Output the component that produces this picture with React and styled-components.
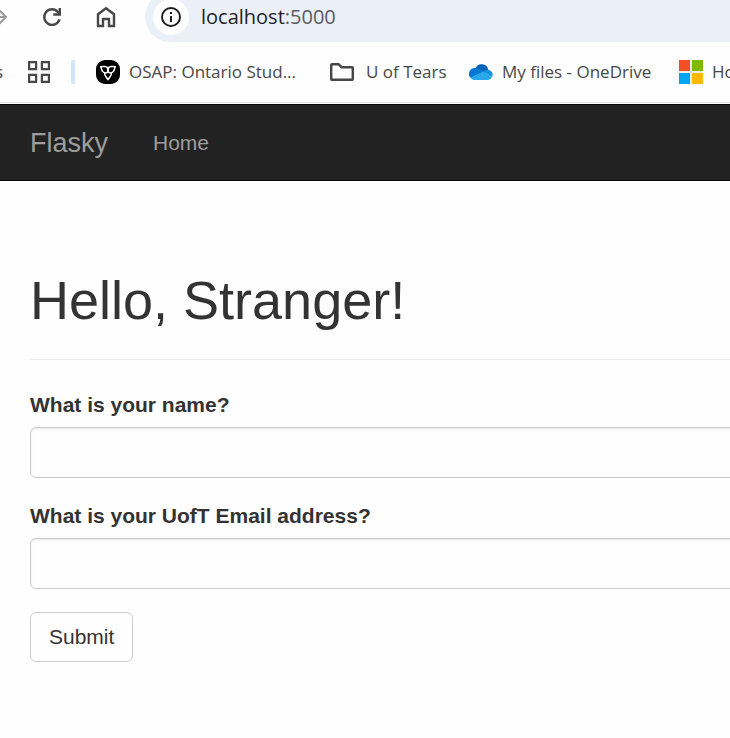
import React from "react";
import styled, { createGlobalStyle } from "styled-components";

const uiFont = `"Open Sans", "Noto Sans", sans-serif`;
const pageFont = `"Liberation Sans", Arial, sans-serif`;

const GlobalStyle = createGlobalStyle`
  *, *::before, *::after { box-sizing: border-box; }
  body {
    margin: 0;
    background: #fefefe;
    color: #333;
    font-family: ${pageFont};
    font-size: 21px;
    line-height: 30px;
    overflow-x: hidden;
  }
  svg { display: block; flex: none; }
`;

const BrowserChrome = styled.div`
  background: #fefefe;
  border-bottom: 1px solid #dcdcdc;
  font-family: ${uiFont};
  overflow: hidden;
`;

const Toolbar = styled.div`
  display: flex;
  align-items: flex-end;
  height: 42px;
  overflow: hidden;
`;

const ToolbarRow = styled.div`
  display: flex;
  flex: 1;
  align-items: center;
  height: 50px;
`;

const IconButton = styled.button`
  display: flex;
  align-items: center;
  justify-content: ${(p) => p.$align || "center"};
  flex: none;
  width: ${(p) => p.$width}px;
  height: 36px;
  padding: 0;
  border: 0;
  background: transparent;
  color: #474747;
`;

const AddressBar = styled.div`
  display: flex;
  align-items: center;
  gap: 12px;
  flex: 1;
  height: 50px;
  margin-left: 12px;
  padding-left: 8px;
  border-radius: 25px 0 0 25px;
  background: #ebeff8;
`;

const SiteInfo = styled.button`
  display: flex;
  align-items: center;
  justify-content: center;
  width: 36px;
  height: 36px;
  padding: 0;
  border: 0;
  border-radius: 50%;
  background: #fefefe;
  color: #1f1f1f;
`;

const Address = styled.span`
  font-size: 20px;
  line-height: 30px;
  color: #5a5c60;
`;

const Host = styled.span`
  color: #1f1f1f;
`;

const BookmarksBar = styled.nav`
  display: flex;
  align-items: center;
  height: 60px;
  overflow: hidden;
`;

const ClippedBookmark = styled.a`
  display: flex;
  justify-content: flex-end;
  flex: none;
  width: 3px;
  margin-right: 14px;
  overflow: hidden;
  color: #474747;
  font-size: 17px;
  text-decoration: none;
`;

const BarDivider = styled.span`
  flex: none;
  width: 4px;
  height: 24px;
  margin: 0 21px 0 10px;
  border-radius: 2px;
  background: #d3e3fd;
`;

const Bookmark = styled.a`
  display: flex;
  align-items: center;
  gap: ${(p) => p.$gap || 9}px;
  flex: 0 0 ${(p) => p.$width}px;
  color: #474747;
  font-size: 17px;
  line-height: 30px;
  white-space: nowrap;
  text-decoration: none;
`;

const Navbar = styled.nav`
  display: flex;
  align-items: center;
  gap: 45px;
  margin-top: 1px;
  padding: 23px 30px 22px;
  border: 1px solid #080808;
  border-width: 1px 0;
  background: #222;
`;

const NavLink = styled.a`
  color: #9d9d9d;
  font-size: ${(p) => (p.$brand ? 27 : 21)}px;
  line-height: 30px;
  text-decoration: none;
`;

const Main = styled.main`
  padding: 89px 0 60px 30px;
`;

const PageHeader = styled.header`
  padding-bottom: 29px;
  margin-bottom: 30px;
  border-bottom: 1px solid #eee;
`;

const Title = styled.h1`
  margin: 0;
  font-size: 54px;
  line-height: 60px;
  font-weight: 400;
`;

const Form = styled.form`
  display: flex;
  flex-direction: column;
  align-items: stretch;
`;

const Field = styled.div`
  display: flex;
  flex-direction: column;
  gap: 7px;
  margin-bottom: 23px;
`;

const Label = styled.label`
  font-weight: 700;
`;

const TextInput = styled.input`
  width: calc(100% + 6px);
  height: 51px;
  padding: 9px 18px;
  border: 1px solid #ccc;
  border-radius: 6px;
  background: #fefefe;
  color: #555;
  font: inherit;
  box-shadow: inset 0 1px 2px rgba(0, 0, 0, 0.1);
`;

const SubmitButton = styled.button`
  align-self: flex-start;
  padding: 9px 18px;
  border: 1px solid #ccc;
  border-radius: 6px;
  background: #fefefe;
  color: #333;
  font: inherit;
`;

const ForwardIcon = () => (
  <svg width="8" height="24" viewBox="14 0 8 24" fill="none" stroke="#9a9a9a" strokeWidth="2">
    <path d="M4 12h15M13 5l7 7-7 7" />
  </svg>
);

const ReloadIcon = () => (
  <svg width="20" height="20" viewBox="0 0 20 20" fill="none" stroke="currentColor" strokeWidth="2.4">
    <path d="M17.5 12.4A7.8 7.8 0 1 1 16.2 5.2L18 7" />
    <path d="M17.8 1v6.5h-6.5" />
  </svg>
);

const HomeIcon = () => (
  <svg width="20" height="22" viewBox="0 0 20 22" fill="none" stroke="currentColor" strokeWidth="2.4">
    <path d="M2 8.2 10 2.2l8 6V20h-5v-7H7v7H2z" />
  </svg>
);

const InfoIcon = () => (
  <svg width="20" height="20" viewBox="0 0 20 20" fill="none" stroke="currentColor" strokeWidth="2">
    <circle cx="10" cy="10" r="9" />
    <path d="M10 9v6M10 5v2" />
  </svg>
);

const GridIcon = () => (
  <svg width="22" height="22" viewBox="0 0 22 22" fill="none" stroke="currentColor" strokeWidth="2.2">
    <path d="M1.100 1.100h7v7h-7zM13.900 1.100h7v7h-7zM1.100 13.900h7v7h-7zM13.900 13.900h7v7h-7z" />
  </svg>
);

const TrilliumIcon = () => (
  <svg width="24" height="24" viewBox="0 0 24 24">
    <rect width="24" height="24" rx="9" fill="#000" />
    <g fill="none" stroke="#fff" strokeWidth="1.5" strokeLinejoin="round">
      <path d="M12 11.8C10.6 13.4 8 13.2 6.600 11.400 5.600 10 5.500 8.400 4.700 6.700c2.200.2 4.100-.8 5.800.1 1.500.9 2.100 2.900 1.500 5z" />
      <path d="M12 11.800c1.400 1.600 4 1.400 5.400-.4 1-1.400 1.100-3 1.900-4.700-2.200.2-4.100-.8-5.800.1-1.500.9-2.100 2.900-1.500 5z" />
      <path d="M8.600 12.800c-.5 3 2.100 4.400 3.400 6.900 1.300-2.500 3.900-3.900 3.400-6.900" />
    </g>
  </svg>
);

const FolderIcon = () => (
  <svg width="24" height="18" viewBox="0 0 24 18" fill="none" stroke="currentColor" strokeWidth="2.4" strokeLinejoin="round">
    <path d="M2 1.200h6.500l3 3H22a.8.8 0 0 1 .8.8v11a.8.8 0 0 1-.8.8H2a.8.8 0 0 1-.8-.8V2a.8.8 0 0 1 .8-.8z" />
  </svg>
);

const OneDriveIcon = () => (
  <svg width="24" height="16" viewBox="0 0 24 16">
    <path d="M6.500 4.500A6.600 6.600 0 0 1 19.200 5.700L14 10z" fill="#0364b8" />
    <path d="M6.500 4.100c1.600 0 2.900.3 4.100 1l4.500 2.700L1.600 13.900A5.800 5.800 0 0 1 6.500 4.100z" fill="#0078d4" />
    <path d="m14 7.500 2-1c1-.5 2.100-.8 3.400-.8A5 5 0 0 1 23 13z" fill="#1490df" />
    <path d="M14.300 7.500 23 12.900A4.700 4.700 0 0 1 19 16H6c-1.700 0-3.300-.9-4.400-2.300z" fill="#28a8ea" />
  </svg>
);

const MicrosoftIcon = () => (
  <svg width="24" height="24" viewBox="0 0 24 24">
    <path d="M0 0h24v24H0z" fill="#ececec" />
    <path d="M0 0h11v11H0z" fill="#f25022" />
    <path d="M13 0h11v11H13z" fill="#7fba00" />
    <path d="M0 13h11v11H0z" fill="#00a4ef" />
    <path d="M13 13h11v11H13z" fill="#ffb900" />
  </svg>
);

const bookmarks = [
  { text: "OSAP: Ontario Stud...", Icon: TrilliumIcon, width: 234 },
  { text: "U of Tears", Icon: FolderIcon, width: 139, gap: 12 },
  { text: "My files - OneDrive", Icon: OneDriveIcon, width: 210 },
  { text: "Ho", Icon: MicrosoftIcon, width: 60 },
];

const fields = [
  { id: "name", text: "What is your name?", type: "text" },
  { id: "email", text: "What is your UofT Email address?", type: "text" },
];

export default function App() {
  return (
    <>
      <GlobalStyle />
      <BrowserChrome>
        <Toolbar>
          <ToolbarRow>
            <IconButton $width={25} $align="flex-start" aria-label="Forward">
              <ForwardIcon />
            </IconButton>
            <IconButton $width={54} aria-label="Reload">
              <ReloadIcon />
            </IconButton>
            <IconButton $width={54} aria-label="Home">
              <HomeIcon />
            </IconButton>
            <AddressBar>
              <SiteInfo aria-label="Site information">
                <InfoIcon />
              </SiteInfo>
              <Address>
                <Host>localhost</Host>:5000
              </Address>
            </AddressBar>
          </ToolbarRow>
        </Toolbar>
        <BookmarksBar aria-label="Bookmarks">
          <ClippedBookmark href="#">s</ClippedBookmark>
          <IconButton $width={44} aria-label="Tab groups">
            <GridIcon />
          </IconButton>
          <BarDivider />
          {bookmarks.map(({ text, Icon, width, gap }) => (
            <Bookmark key={text} href="#" $width={width} $gap={gap}>
              <Icon />
              {text}
            </Bookmark>
          ))}
        </BookmarksBar>
      </BrowserChrome>
      <Navbar>
        <NavLink href="#" $brand>
          Flasky
        </NavLink>
        <NavLink href="#">Home</NavLink>
      </Navbar>
      <Main>
        <PageHeader>
          <Title>Hello, Stranger!</Title>
        </PageHeader>
        <Form onSubmit={(e) => e.preventDefault()}>
          {fields.map(({ id, text, type }) => (
            <Field key={id}>
              <Label htmlFor={id}>{text}</Label>
              <TextInput id={id} type={type} />
            </Field>
          ))}
          <SubmitButton type="submit">Submit</SubmitButton>
        </Form>
      </Main>
    </>
  );
}
